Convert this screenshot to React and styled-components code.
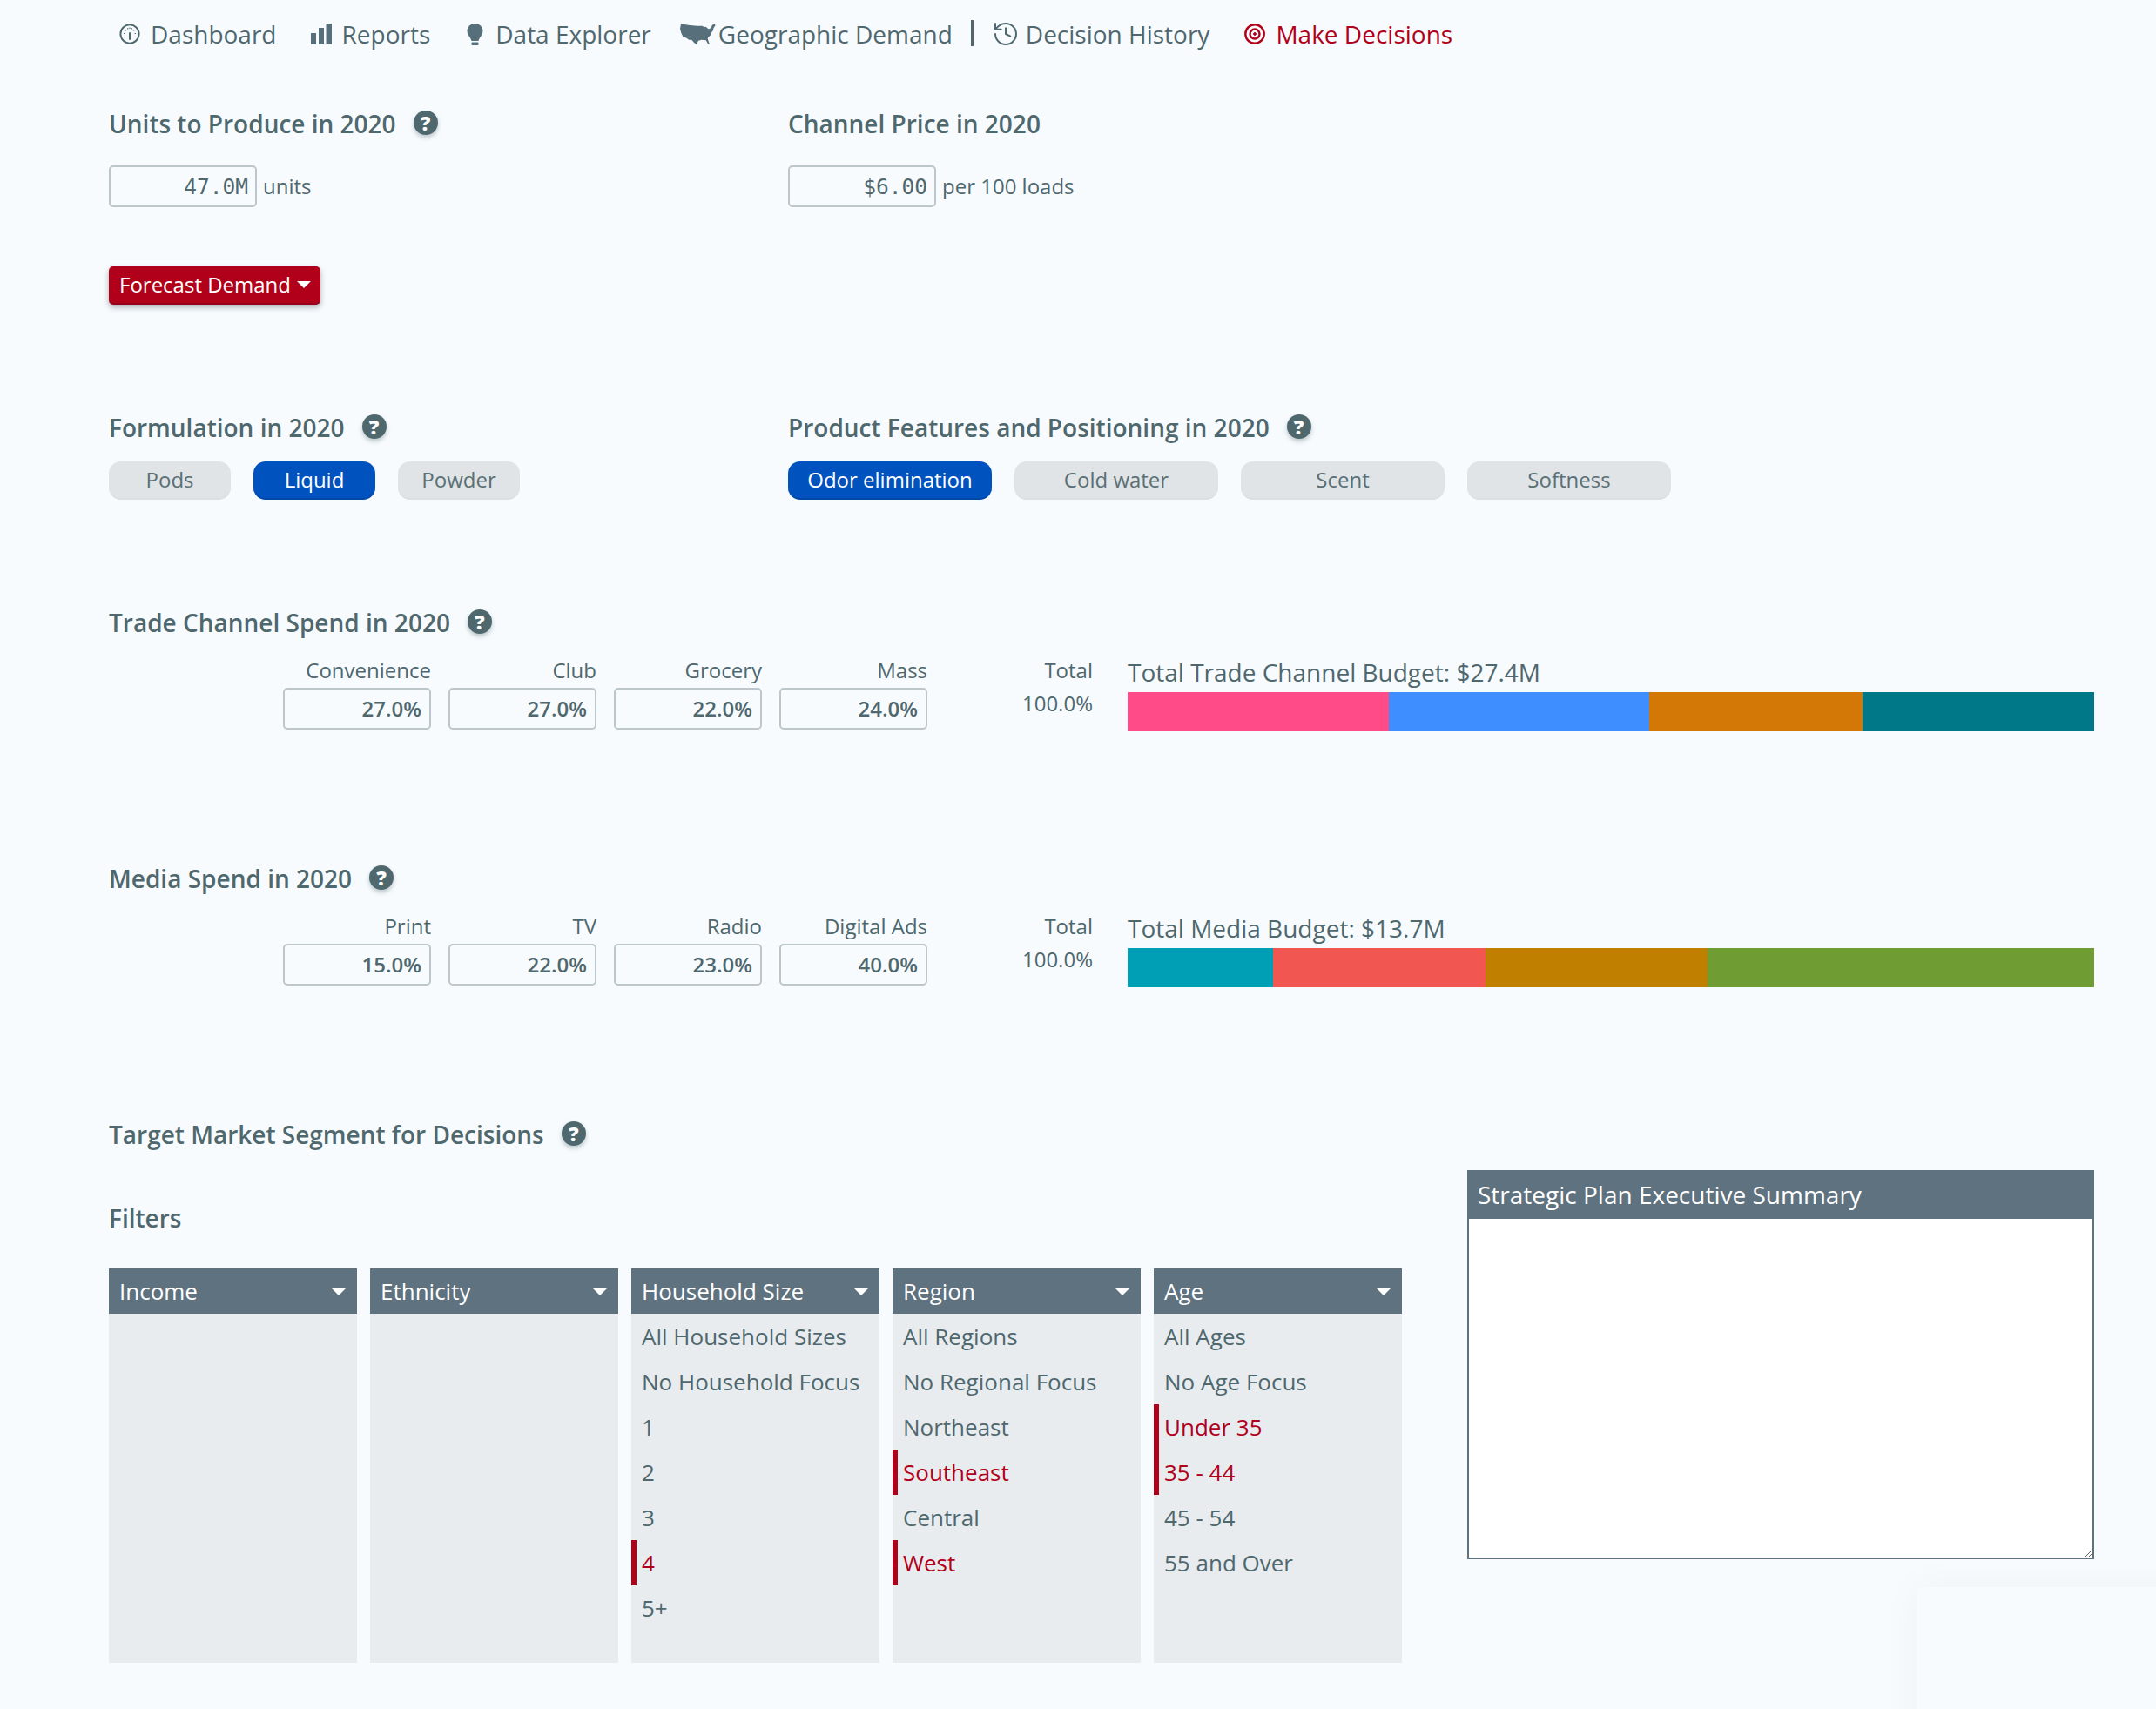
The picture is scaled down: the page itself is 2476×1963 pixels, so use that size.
import React from "react";
import styled, { createGlobalStyle } from "styled-components";
import { History } from "lucide-react";

const GlobalStyle = createGlobalStyle`
  html, body {
    margin: 0;
    padding: 0;
    background: #f7fbfe;
  }
  * {
    box-sizing: border-box;
  }
`;

const TEXT = "#4f686e";
const SLATE = "#5f7280";
const RED = "#b10019";

const Page = styled.div`
  position: relative;
  width: 2476px;
  height: 1963px;
  overflow: hidden;
  padding: 0 71px 0 125px;
  background: #f7fbfe;
  color: ${TEXT};
  font-family: "Open Sans", "Liberation Sans", sans-serif;
`;

const Nav = styled.nav`
  display: flex;
  align-items: center;
  height: 78px;
  padding-left: 12px;
  font-size: 28px;
`;

const NavItem = styled.a`
  display: flex;
  align-items: center;
  gap: ${(p) => p.$gap ?? 12}px;
  margin-right: ${(p) => p.$after}px;
  color: ${(p) => (p.$active ? RED : TEXT)};
  white-space: nowrap;
  svg {
    flex: none;
  }
`;

const NavDivider = styled.span`
  width: 3px;
  height: 30px;
  margin: -2px 21px 0 0;
  background: ${TEXT};
`;

const TwoCols = styled.div`
  display: grid;
  grid-template-columns: 780px 1fr;
  margin-top: ${(p) => p.$top}px;
`;

const Heading = styled.h2`
  display: flex;
  align-items: center;
  height: 40px;
  margin: 0;
  font-size: 28px;
  font-weight: 600;
  white-space: nowrap;
`;

const Section = styled.section`
  margin-top: ${(p) => p.$top}px;
`;

const HelpBadge = styled.span`
  display: inline-flex;
  align-items: center;
  justify-content: center;
  width: 28px;
  height: 28px;
  margin: -3px 0 0 20px;
  border-radius: 50%;
  background: ${TEXT};
  color: #fff;
  font-size: 23px;
  font-weight: 800;
  box-shadow: 0 3px 5px rgba(79, 104, 110, 0.35);
`;

const UnitRow = styled.div`
  display: flex;
  align-items: center;
  gap: 7px;
  margin-top: 28px;
  font-size: 24px;
`;

const UnitLabel = styled.span`
  margin-top: -2px;
`;

const Field = styled.div`
  display: flex;
  align-items: center;
  justify-content: flex-end;
  width: 170px;
  height: 48px;
  padding: 0 ${(p) => (p.$mono ? 8 : 9)}px ${(p) => (p.$mono ? 0 : 2)}px 0;
  border: 2px solid #bcc6cb;
  border-radius: 5px;
  font-family: ${(p) =>
    p.$mono
      ? '"DejaVu Sans Mono", "Liberation Mono", monospace'
      : '"Open Sans", sans-serif'};
  font-size: ${(p) => (p.$mono ? 24.5 : 24)}px;
  font-weight: ${(p) => (p.$mono ? 400 : 600)};
`;

const ForecastButton = styled.button`
  display: flex;
  align-items: center;
  gap: 7px;
  width: 243px;
  height: 44px;
  margin-top: 68px;
  padding: 0 12px 2px;
  border: none;
  border-bottom: 2px solid #96001a;
  border-radius: 5px;
  background: ${RED};
  color: #fff;
  font-family: inherit;
  font-size: 24px;
  white-space: nowrap;
  box-shadow: 0 3px 6px rgba(60, 70, 80, 0.4);
`;

const Caret = styled.span`
  width: 0;
  height: 0;
  margin-top: 2px;
  border-left: 8px solid transparent;
  border-right: 8px solid transparent;
  border-top: 8px solid #fff;
`;

const PillRow = styled.div`
  display: flex;
  gap: 26px;
  margin-top: 19px;
`;

const Pill = styled.div`
  display: flex;
  align-items: center;
  justify-content: center;
  width: ${(p) => p.$width}px;
  height: 44px;
  padding-bottom: 2px;
  border-radius: 14px;
  background: ${(p) => (p.$on ? "#0052bf" : "#e0e4e7")};
  border-bottom: 2px solid ${(p) => (p.$on ? "#0047a6" : "#dbdfe2")};
  color: ${(p) => (p.$on ? "#fff" : "#5a7075")};
  font-size: 24px;
  white-space: nowrap;
`;

const SpendRow = styled.div`
  display: flex;
  margin-top: 20px;
  padding-left: 200px;
`;

const SpendCell = styled.div`
  display: flex;
  flex-direction: column;
  align-items: flex-end;
  width: 170px;
  margin-right: 20px;
`;

const SpendLabel = styled.div`
  height: 30px;
  margin-bottom: 5px;
  font-size: 24px;
  line-height: 30px;
  white-space: nowrap;
`;

const TotalCell = styled.div`
  display: flex;
  flex-direction: column;
  align-items: flex-end;
  width: 170px;
  margin-right: 40px;
  font-size: 24px;
  line-height: 30px;
  div + div {
    margin-top: 8px;
  }
`;

const BudgetCol = styled.div`
  flex: 1;
`;

const BudgetTitle = styled.div`
  height: 40px;
  font-size: 28px;
  line-height: 34px;
  white-space: nowrap;
`;

const Bar = styled.div`
  display: flex;
  height: 45px;
`;

const BarPart = styled.div`
  background: ${(p) => p.$color};
`;

const DecisionArea = styled.div`
  display: flex;
  justify-content: space-between;
  margin-top: 21px;
`;

const FiltersCol = styled.div`
  padding-top: 35px;
`;

const FilterGrid = styled.div`
  display: grid;
  grid-template-columns: repeat(5, 285px);
  gap: 15px;
  margin-top: 38px;
`;

const FilterCol = styled.div`
  height: 453px;
  background: #e8ecef;
`;

const FilterHead = styled.div`
  display: flex;
  align-items: center;
  justify-content: space-between;
  height: 52px;
  padding: 0 13px 0 12px;
  background: ${SLATE};
  color: #fff;
  font-size: 26px;
`;

const FilterRow = styled.div`
  height: 52px;
  padding-left: ${(p) => (p.$on ? 6 : 12)}px;
  border-left: ${(p) => (p.$on ? `6px solid ${RED}` : "none")};
  color: ${(p) => (p.$on ? RED : TEXT)};
  font-size: 26px;
  line-height: 52px;
  white-space: nowrap;
`;

const SummaryBox = styled.div`
  display: flex;
  flex-direction: column;
  width: 720px;
  height: 447px;
`;

const SummaryHead = styled.div`
  display: flex;
  align-items: center;
  height: 56px;
  padding-left: 12px;
  background: ${SLATE};
  color: #fff;
  font-size: 28px;
`;

const SummaryText = styled.textarea`
  flex: 1;
  display: block;
  width: 100%;
  border: 2px solid ${SLATE};
  border-top: none;
  border-radius: 0;
  background: #fff;
  resize: both;
  outline: none;
`;

// faint shadow of a popup sitting in the page corner
const CornerGlow = styled.div`
  position: absolute;
  left: 2201px;
  top: 1823px;
  width: 400px;
  height: 300px;
  background: #f7fbfe;
  box-shadow: 0 0 45px rgba(40, 50, 60, 0.04);
`;

const GaugeIcon = () => (
  <svg width="24" height="24" viewBox="0 0 24 24" fill="none" stroke={TEXT}>
    <circle cx="12" cy="12" r="10.6" strokeWidth="1.9" />
    <path d="M12 11v7" strokeWidth="2" strokeLinecap="round" />
    <path
      d="M5 11.5h1.4M6.5 7.5l1.2.8M9.5 5.2l.5 1.3M12 4.6v1.4M14.5 5.2l-.5 1.3M17.5 7.5l-1.2.8M19 11.5h-1.4"
      strokeWidth="1.2"
    />
  </svg>
);

const BarsIcon = () => (
  <svg width="24" height="24" viewBox="0 0 24 24" fill="#566f7b">
    <rect x="0" y="11" width="6" height="13" />
    <rect x="9" y="5" width="6" height="19" />
    <rect x="17.5" y="0" width="6.5" height="24" />
  </svg>
);

const BulbIcon = () => (
  <svg width="19" height="25" viewBox="0 0 19 25" fill="#566f7b">
    <path d="M9.5 0C4.3 0 .5 3.8.5 8.6c0 4.6 3.6 6.6 5 11.4h8c1.4-4.8 5-6.8 5-11.4C18.5 3.8 14.7 0 9.5 0z" />
    <rect x="5.5" y="21.5" width="8" height="3.5" rx="1" />
  </svg>
);

const UsaIcon = () => (
  <svg width="41" height="25" viewBox="0 0 40 24" fill="#566f7b">
    <path d="M1 0L9 1.5L19 2.5L25 2.5L27 4L29 3.5L31 5.5L33 6L35 4L36 1.5L39 0L39.5 2L37.5 5L37 7.5L35 10L34 13L31.5 15.5L31 17L33 23L31.5 23L29 18.5L24 18L20.5 19L18.5 23.5L15.5 21L13 18L10 18L7 16L3.5 15L1.5 11L0 6Z" />
  </svg>
);

const TargetIcon = () => (
  <svg width="24" height="24" viewBox="0 0 24 24" fill="none" stroke={RED}>
    <circle cx="12" cy="12" r="10.7" strokeWidth="2.4" />
    <circle cx="12" cy="12" r="5.5" strokeWidth="2.4" />
    <circle cx="12" cy="12" r="1.4" fill={RED} strokeWidth="1" />
  </svg>
);

const Help = () => <HelpBadge>?</HelpBadge>;

const spendBlocks = [
  {
    heading: "Trade Channel Spend in 2020",
    title: "Total Trade Channel Budget: $27.4M",
    top: 121,
    items: [
      ["Convenience", 27, "#ff4b87"],
      ["Club", 27, "#3e8eff"],
      ["Grocery", 22, "#d37707"],
      ["Mass", 24, "#007887"],
    ],
  },
  {
    heading: "Media Spend in 2020",
    title: "Total Media Budget: $13.7M",
    top: 149,
    items: [
      ["Print", 15, "#009fb5"],
      ["TV", 22, "#f25650"],
      ["Radio", 23, "#c17f00"],
      ["Digital Ads", 40, "#6f9d33"],
    ],
  },
];

const filters = [
  { name: "Income", rows: [] },
  { name: "Ethnicity", rows: [] },
  {
    name: "Household Size",
    rows: ["All Household Sizes", "No Household Focus", "1", "2", "3", "4", "5+"],
    on: ["4"],
  },
  {
    name: "Region",
    rows: ["All Regions", "No Regional Focus", "Northeast", "Southeast", "Central", "West"],
    on: ["Southeast", "West"],
  },
  {
    name: "Age",
    rows: ["All Ages", "No Age Focus", "Under 35", "35 - 44", "45 - 54", "55 and Over"],
    on: ["Under 35", "35 - 44"],
  },
];

export default function App() {
  return (
    <Page>
      <GlobalStyle />
      <Nav>
        <NavItem $after={39}>
          <GaugeIcon />
          Dashboard
        </NavItem>
        <NavItem $after={42}>
          <BarsIcon />
          Reports
        </NavItem>
        <NavItem $after={33} $gap={14}>
          <BulbIcon />
          Data Explorer
        </NavItem>
        <NavItem $after={21} $gap={3}>
          <UsaIcon />
          Geographic Demand
        </NavItem>
        <NavDivider />
        <NavItem $after={40} $gap={7}>
          <History size={32} strokeWidth={1.5} />
          Decision History
        </NavItem>
        <NavItem $active>
          <TargetIcon />
          Make Decisions
        </NavItem>
      </Nav>

      <TwoCols $top={44}>
        <div>
          <Heading>
            Units to Produce in 2020
            <Help />
          </Heading>
          <UnitRow>
            <Field $mono>47.0M</Field>
            <UnitLabel>units</UnitLabel>
          </UnitRow>
        </div>
        <div>
          <Heading>Channel Price in 2020</Heading>
          <UnitRow>
            <Field $mono>$6.00</Field>
            <UnitLabel>per 100 loads</UnitLabel>
          </UnitRow>
        </div>
      </TwoCols>

      <ForecastButton>
        Forecast Demand
        <Caret />
      </ForecastButton>

      <TwoCols $top={121}>
        <div>
          <Heading>
            Formulation in 2020
            <Help />
          </Heading>
          <PillRow>
            <Pill $width={140}>Pods</Pill>
            <Pill $width={140} $on>
              Liquid
            </Pill>
            <Pill $width={140}>Powder</Pill>
          </PillRow>
        </div>
        <div>
          <Heading>
            Product Features and Positioning in 2020
            <Help />
          </Heading>
          <PillRow>
            <Pill $width={234} $on>
              Odor elimination
            </Pill>
            <Pill $width={234}>Cold water</Pill>
            <Pill $width={234}>Scent</Pill>
            <Pill $width={234}>Softness</Pill>
          </PillRow>
        </div>
      </TwoCols>

      {spendBlocks.map((block) => (
        <Section key={block.heading} $top={block.top}>
          <Heading>
            {block.heading}
            <Help />
          </Heading>
          <SpendRow>
            {block.items.map(([label, pct]) => (
              <SpendCell key={label}>
                <SpendLabel>{label}</SpendLabel>
                <Field>{pct}.0%</Field>
              </SpendCell>
            ))}
            <TotalCell>
              <div>Total</div>
              <div>100.0%</div>
            </TotalCell>
            <BudgetCol>
              <BudgetTitle>{block.title}</BudgetTitle>
              <Bar>
                {block.items.map(([label, pct, color]) => (
                  <BarPart key={label} $color={color} style={{ width: `${pct}%` }} />
                ))}
              </Bar>
            </BudgetCol>
          </SpendRow>
        </Section>
      ))}

      <Section $top={149}>
        <Heading>
          Target Market Segment for Decisions
          <Help />
        </Heading>
      </Section>

      <DecisionArea>
        <FiltersCol>
          <Heading>Filters</Heading>
          <FilterGrid>
            {filters.map((f) => (
              <FilterCol key={f.name}>
                <FilterHead>
                  {f.name}
                  <Caret />
                </FilterHead>
                {f.rows.map((r) => (
                  <FilterRow key={r} $on={f.on?.includes(r)}>
                    {r}
                  </FilterRow>
                ))}
              </FilterCol>
            ))}
          </FilterGrid>
        </FiltersCol>
        <SummaryBox>
          <SummaryHead>Strategic Plan Executive Summary</SummaryHead>
          <SummaryText />
        </SummaryBox>
      </DecisionArea>
      <CornerGlow />
    </Page>
  );
}
